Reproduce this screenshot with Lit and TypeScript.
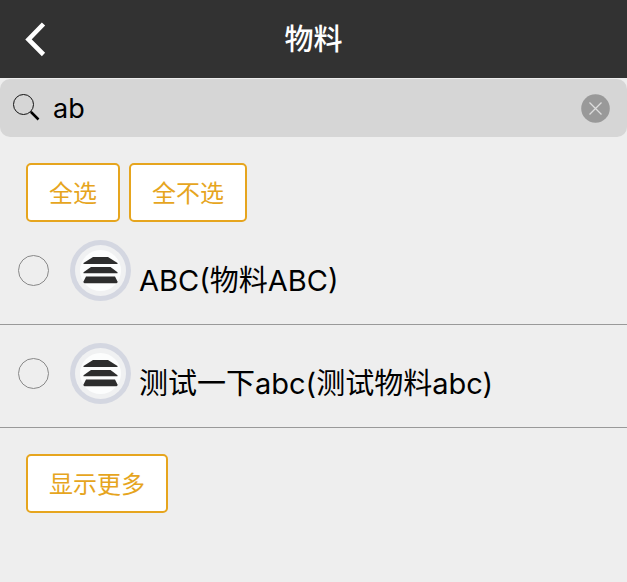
import { LitElement, html, css } from "lit";
import { customElement, property, state } from "lit/decorators.js";

const FONT = css`Inter, "Noto Sans CJK SC", "Noto Sans", sans-serif`;

@customElement("material-item")
class MaterialItem extends LitElement {
  @property() label = "";

  static styles = css`
    :host {
      display: block;
      border-bottom: 1px solid #999;
    }
    .row {
      display: flex;
      align-items: center;
      padding: 18px 18px 23px;
      font: 29px/36px ${FONT};
      color: #000;
    }
    .pick {
      appearance: none;
      flex: none;
      width: 31px;
      height: 31px;
      margin: 0 21px 0 0;
      border: 1px solid #888;
      border-radius: 50%;
    }
    .pick:checked {
      background: #e6a51e;
      border-color: #e6a51e;
    }
    .avatar {
      flex: none;
      width: 61px;
      height: 61px;
      margin-right: 8px;
    }
    .name {
      padding-top: 20px;
    }
  `;

  render() {
    return html`
      <label class="row">
        <input class="pick" type="radio" />
        <svg class="avatar" viewBox="0 0 61 61" aria-hidden="true">
          <circle cx="30.5" cy="30.5" r="30.5" fill="#d4d7e1" />
          <circle cx="30.5" cy="30.5" r="25.5" fill="#f0f1f2" />
          <circle cx="30.5" cy="30.5" r="20.5" fill="#fcfdfd" />
          <g fill="#2d2d2d">
            <path d="M23 17h15l9.500 6v1h-34v-1z" />
            <path d="M21 27h19.500l7 5.300v1h-34v-1z" />
            <path d="M16 36.500h29l2.500 5v1l-1 .8H14.500l-1-.8v-1z" />
          </g>
        </svg>
        <span class="name">${this.label}</span>
      </label>
    `;
  }
}

@customElement("app-root")
class AppRoot extends LitElement {
  @state() items = ["ABC(物料ABC)", "测试一下abc(测试物料abc)"];

  static styles = css`
    :host {
      display: block;
      min-height: 100vh;
      background: #eee;
      font-family: ${FONT};
    }
    button,
    input {
      font-family: inherit;
    }
    .bar {
      display: grid;
      grid-template-columns: 72px 1fr 72px;
      align-items: center;
      height: 78px;
      background: #323232;
      color: #fff;
    }
    .title {
      margin: 0;
      padding-top: 2px;
      text-align: center;
      font-size: 29px;
      line-height: 40px;
      font-weight: 500;
    }
    .icon-button {
      display: flex;
      padding: 0;
      border: 0;
      background: none;
    }
    .back {
      padding-left: 24px;
    }
    .search {
      display: flex;
      align-items: center;
      height: 58px;
      margin-top: 1px;
      padding: 0 17px 0 12px;
      border-radius: 10px;
      background: #d6d6d6;
    }
    .query {
      flex: 1;
      min-width: 0;
      margin: 0 12px;
      padding: 2px 0 0;
      border: 0;
      outline: 0;
      background: none;
      color: #000;
      font-size: 27px;
      line-height: 36px;
    }
    .actions {
      display: flex;
      gap: 9px;
      padding: 26px 26px 0;
    }
    .action {
      height: 59px;
      padding: 2px 21px 0;
      border: 2px solid #e6a51e;
      border-radius: 5px;
      background: #fff;
      color: #e6a51e;
      font-size: 24px;
      line-height: 36px;
    }
  `;

  render() {
    return html`
      <header class="bar">
        <button class="icon-button back" aria-label="返回">
          <svg width="24" height="36" viewBox="0 0 24 36">
            <path d="M19.500 3 4.500 18.500l15 15" fill="none" stroke="#fff" stroke-width="4.600" />
          </svg>
        </button>
        <h1 class="title">物料</h1>
      </header>
      <div class="search">
        <svg width="29" height="29" viewBox="0 0 29 29" aria-hidden="true">
          <circle cx="11.500" cy="10.500" r="10" fill="none" stroke="#111" />
          <path d="m18.500 17.500 2 2" stroke="#111" stroke-width="1.500" />
          <path d="m19 18 7.500 7.500" stroke="#000" stroke-width="2.500" />
        </svg>
        <input class="query" type="text" aria-label="搜索" .value=${"ab"} />
        <button class="icon-button" aria-label="清除">
          <svg width="29" height="29" viewBox="0 0 29 29">
            <circle cx="14.500" cy="14.500" r="14.300" fill="#999" />
            <path d="m8.500 8.500 12 12m0-12-12 12" stroke="#ddd" stroke-width="1.300" />
          </svg>
        </button>
      </div>
      <div class="actions">
        <button class="action">全选</button>
        <button class="action">全不选</button>
      </div>
      ${this.items.map((name) => html`<material-item .label=${name}></material-item>`)}
      <div class="actions">
        <button class="action">显示更多</button>
      </div>
    `;
  }
}
